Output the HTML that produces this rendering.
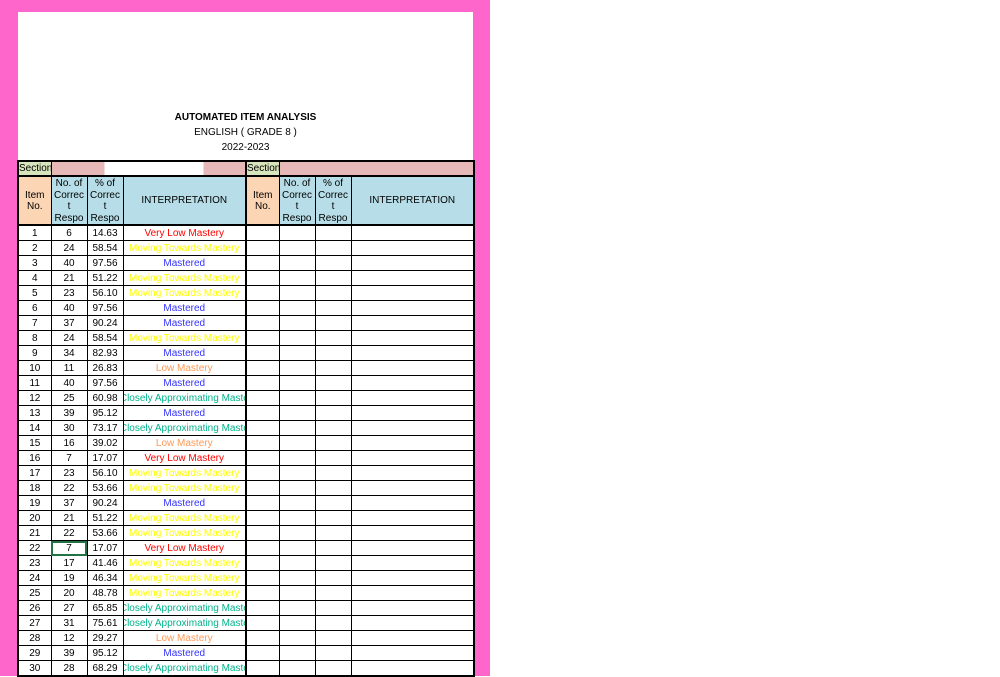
<!DOCTYPE html>
<html><head><meta charset="utf-8"><style>
*{margin:0;padding:0;box-sizing:border-box}
body{width:1000px;height:676px;background:#fff;position:relative;overflow:hidden;font-family:"Liberation Sans",Arial,sans-serif;font-size:10px;color:#000}
#pink{position:absolute;left:0;top:0;width:490px;height:676px;background:#ff66cc}
#sheet{position:absolute;left:18px;top:12px;width:455px;height:664px;background:#fff}
.t{position:absolute;left:18px;width:455px;text-align:center;font-size:10px}
table{position:absolute;left:17px;top:160px;width:457px;border-collapse:collapse;table-layout:fixed}
td{border:1px solid #000;text-align:center;height:14px;padding:2px 0 0 0;white-space:nowrap;overflow:hidden;line-height:12px;font-size:10px}
.h td{height:46px;background:#b7dee8;line-height:11.5px;padding-top:1px;white-space:nowrap}
.h td.i{background:#fcd5b4}
.tk{border-left:2px solid #000}
.r{color:#ff0000}.y{color:#ffff00}.b{color:#3333ff}.o{color:#ff9955}.g{color:#00b38a}
.c{display:block;width:200px;margin-left:-35px;text-align:center}
</style></head><body>
<div id="pink"></div><div id="sheet"></div>
<div class="t" style="top:112px;font-weight:bold">AUTOMATED ITEM ANALYSIS</div>
<div class="t" style="top:127px">ENGLISH ( GRADE 8 )</div>
<div class="t" style="top:142px">2022-2023</div>
<table style="border:2px solid #000">
<colgroup><col style="width:33px"><col style="width:36px"><col style="width:36px"><col style="width:123px"><col style="width:33px"><col style="width:36px"><col style="width:36px"><col style="width:123px"></colgroup>
<tr style="border-bottom:2px solid #000"><td style="background:#d8e4bc;text-align:left;padding-top:1px">Section</td><td colspan="3" style="background:linear-gradient(90deg,#e6b8b7 0,#e6b8b7 53px,#fff 53px,#fff 152px,#e6b8b7 152px)"></td><td class="tk" style="background:#d8e4bc;text-align:left;padding-top:1px">Section</td><td colspan="3" style="background:#e6b8b7"></td></tr>
<tr class="h" style="border-bottom:2px solid #000"><td class="i">Item<br>No.</td><td>No. of<br>Correc<br>t<br>Respo</td><td>% of<br>Correc<br>t<br>Respo</td><td>INTERPRETATION</td><td class="i tk">Item<br>No.</td><td>No. of<br>Correc<br>t<br>Respo</td><td>% of<br>Correc<br>t<br>Respo</td><td>INTERPRETATION</td></tr>
<tr><td>1</td><td>6</td><td>14.63</td><td class="r">Very Low Mastery</td><td class="tk"></td><td></td><td></td><td></td></tr>
<tr><td>2</td><td>24</td><td>58.54</td><td class="y">Moving Towards Mastery</td><td class="tk"></td><td></td><td></td><td></td></tr>
<tr><td>3</td><td>40</td><td>97.56</td><td class="b">Mastered</td><td class="tk"></td><td></td><td></td><td></td></tr>
<tr><td>4</td><td>21</td><td>51.22</td><td class="y">Moving Towards Mastery</td><td class="tk"></td><td></td><td></td><td></td></tr>
<tr><td>5</td><td>23</td><td>56.10</td><td class="y">Moving Towards Mastery</td><td class="tk"></td><td></td><td></td><td></td></tr>
<tr><td>6</td><td>40</td><td>97.56</td><td class="b">Mastered</td><td class="tk"></td><td></td><td></td><td></td></tr>
<tr><td>7</td><td>37</td><td>90.24</td><td class="b">Mastered</td><td class="tk"></td><td></td><td></td><td></td></tr>
<tr><td>8</td><td>24</td><td>58.54</td><td class="y">Moving Towards Mastery</td><td class="tk"></td><td></td><td></td><td></td></tr>
<tr><td>9</td><td>34</td><td>82.93</td><td class="b">Mastered</td><td class="tk"></td><td></td><td></td><td></td></tr>
<tr><td>10</td><td>11</td><td>26.83</td><td class="o">Low Mastery</td><td class="tk"></td><td></td><td></td><td></td></tr>
<tr><td>11</td><td>40</td><td>97.56</td><td class="b">Mastered</td><td class="tk"></td><td></td><td></td><td></td></tr>
<tr><td>12</td><td>25</td><td>60.98</td><td class="g"><span class="c">Closely Approximating Mastery</span></td><td class="tk"></td><td></td><td></td><td></td></tr>
<tr><td>13</td><td>39</td><td>95.12</td><td class="b">Mastered</td><td class="tk"></td><td></td><td></td><td></td></tr>
<tr><td>14</td><td>30</td><td>73.17</td><td class="g"><span class="c">Closely Approximating Mastery</span></td><td class="tk"></td><td></td><td></td><td></td></tr>
<tr><td>15</td><td>16</td><td>39.02</td><td class="o">Low Mastery</td><td class="tk"></td><td></td><td></td><td></td></tr>
<tr><td>16</td><td>7</td><td>17.07</td><td class="r">Very Low Mastery</td><td class="tk"></td><td></td><td></td><td></td></tr>
<tr><td>17</td><td>23</td><td>56.10</td><td class="y">Moving Towards Mastery</td><td class="tk"></td><td></td><td></td><td></td></tr>
<tr><td>18</td><td>22</td><td>53.66</td><td class="y">Moving Towards Mastery</td><td class="tk"></td><td></td><td></td><td></td></tr>
<tr><td>19</td><td>37</td><td>90.24</td><td class="b">Mastered</td><td class="tk"></td><td></td><td></td><td></td></tr>
<tr><td>20</td><td>21</td><td>51.22</td><td class="y">Moving Towards Mastery</td><td class="tk"></td><td></td><td></td><td></td></tr>
<tr><td>21</td><td>22</td><td>53.66</td><td class="y">Moving Towards Mastery</td><td class="tk"></td><td></td><td></td><td></td></tr>
<tr><td>22</td><td style="outline:2px solid #217346;outline-offset:-2px">7</td><td>17.07</td><td class="r">Very Low Mastery</td><td class="tk"></td><td></td><td></td><td></td></tr>
<tr><td>23</td><td>17</td><td>41.46</td><td class="y">Moving Towards Mastery</td><td class="tk"></td><td></td><td></td><td></td></tr>
<tr><td>24</td><td>19</td><td>46.34</td><td class="y">Moving Towards Mastery</td><td class="tk"></td><td></td><td></td><td></td></tr>
<tr><td>25</td><td>20</td><td>48.78</td><td class="y">Moving Towards Mastery</td><td class="tk"></td><td></td><td></td><td></td></tr>
<tr><td>26</td><td>27</td><td>65.85</td><td class="g"><span class="c">Closely Approximating Mastery</span></td><td class="tk"></td><td></td><td></td><td></td></tr>
<tr><td>27</td><td>31</td><td>75.61</td><td class="g"><span class="c">Closely Approximating Mastery</span></td><td class="tk"></td><td></td><td></td><td></td></tr>
<tr><td>28</td><td>12</td><td>29.27</td><td class="o">Low Mastery</td><td class="tk"></td><td></td><td></td><td></td></tr>
<tr><td>29</td><td>39</td><td>95.12</td><td class="b">Mastered</td><td class="tk"></td><td></td><td></td><td></td></tr>
<tr><td>30</td><td>28</td><td>68.29</td><td class="g"><span class="c">Closely Approximating Mastery</span></td><td class="tk"></td><td></td><td></td><td></td></tr>
</table>
</body></html>
